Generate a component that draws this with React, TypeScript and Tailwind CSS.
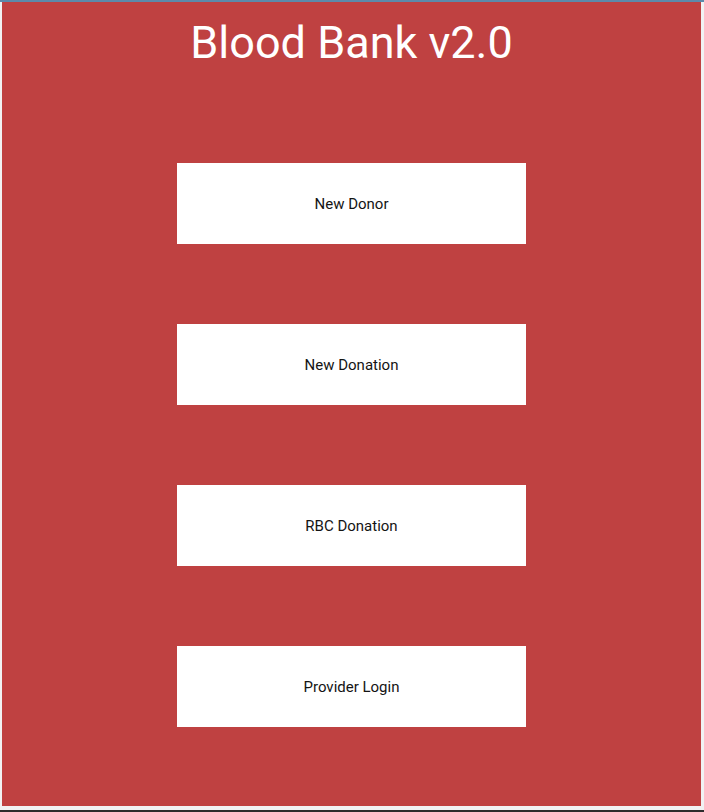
const items = ["New Donor", "New Donation", "RBC Donation", "Provider Login"];

export default function App() {
  return (
    <div className="flex h-[812px] w-[704px] flex-col overflow-hidden border-t-2 border-[#5b8aab] bg-[#f1f2f3] font-['Roboto',sans-serif]">
      {/* Main panel */}
      <div className="ml-[2px] flex w-[699px] flex-col items-center bg-[#bf4141] pt-[15px] pb-[79px]">
        <h1 className="text-[45px] leading-[52px] font-normal text-white">Blood Bank v2.0</h1>

        <div className="mt-[94px] flex flex-col gap-[80px]">
          {items.map((label) => (
            <button
              key={label}
              className="flex h-[81px] w-[349px] items-center justify-center bg-white pt-[2px] text-[15px] text-[#141414]"
            >
              {label}
            </button>
          ))}
        </div>
      </div>
      <div className="flex-1" />
      <div className="h-[2px] bg-[#2c2c2c]" />
    </div>
  );
}
